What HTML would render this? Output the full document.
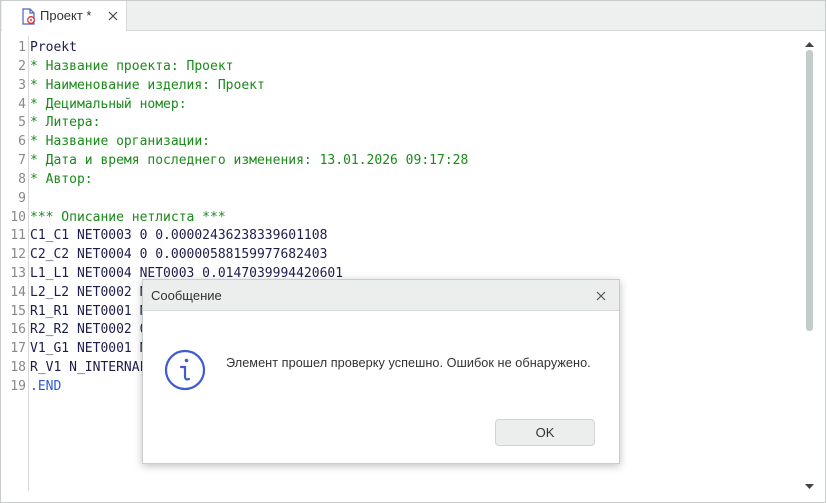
<!DOCTYPE html>
<html><head><meta charset="utf-8"><style>
body{margin:0;width:826px;height:503px;background:#fff;position:relative;overflow:hidden;font-family:"Liberation Sans","DejaVu Sans",sans-serif}
.frame{position:absolute;left:0;top:0;width:824px;height:501px;border:1px solid #c8cccb}
.tabbar{position:absolute;left:1px;top:1px;width:824px;height:29px;background:#eef0ef;border-bottom:1px solid #d6d9d8}
.tab{position:absolute;left:1px;top:0;width:124px;height:30px;background:#fff;border-right:1px solid #d6d9d8}
.tab span{position:absolute;left:38px;top:7px;font-size:13px;color:#333}
.code{position:absolute;left:0;top:39px;font-family:"DejaVu Sans Mono",monospace;font-size:13px;line-height:18.83px}
.ln{position:absolute;left:0;width:26px;text-align:right;color:#888}
.tx{position:absolute;left:30px;white-space:pre;color:#1d1d4d}
.g{color:#1a8a1a}.b{color:#2a5bd7}
.sep{position:absolute;left:28px;top:36px;width:1px;height:455px;background:#d8d8d8}
.dlg{position:absolute;left:142px;top:279px;width:476px;height:183px;background:#fff;border:1px solid #c8cccb;box-shadow:0 2px 8px rgba(0,0,0,.25)}
.dh{height:30px;background:#eceeed;border-bottom:1px solid #d8dbda;font-size:13px;color:#333}
</style></head><body>
<div class="frame"></div>
<div class="tabbar"><div class="tab">
<svg style="position:absolute;left:19px;top:7px" width="16" height="17" viewBox="0 0 16 17"><path d="M2 1h7l4 4v11H2z" fill="#fff" stroke="#4a62c8" stroke-width="1.2"/><path d="M9 1v4h4" fill="none" stroke="#4a62c8" stroke-width="1.2"/><circle cx="10" cy="12" r="3.3" fill="#fff" stroke="#d33" stroke-width="1.3"/><circle cx="10" cy="12" r="1" fill="#d33"/></svg>
<span>Проект *</span>
<svg style="position:absolute;left:106px;top:10px" width="10" height="10"><path d="M1 1l8 8M9 1L1 9" stroke="#444" stroke-width="1.2"/></svg>
</div></div>
<div class="sep"></div>
<div class="code">
<div class="ln" style="top:0">1</div><div class="tx" style="top:0">Proekt</div>
<div class="ln" style="top:18.83px">2</div><div class="tx g" style="top:18.83px">* Название проекта: Проект</div>
<div class="ln" style="top:37.66px">3</div><div class="tx g" style="top:37.66px">* Наименование изделия: Проект</div>
<div class="ln" style="top:56.5px">4</div><div class="tx g" style="top:56.5px">* Децимальный номер:</div>
<div class="ln" style="top:75.3px">5</div><div class="tx g" style="top:75.3px">* Литера:</div>
<div class="ln" style="top:94.2px">6</div><div class="tx g" style="top:94.2px">* Название организации:</div>
<div class="ln" style="top:113px">7</div><div class="tx g" style="top:113px">* Дата и время последнего изменения: 13.01.2026 09:17:28</div>
<div class="ln" style="top:131.8px">8</div><div class="tx g" style="top:131.8px">* Автор:</div>
<div class="ln" style="top:150.6px">9</div>
<div class="ln" style="top:169.5px">10</div><div class="tx g" style="top:169.5px">*** Описание нетлиста ***</div>
<div class="ln" style="top:188.3px">11</div><div class="tx" style="top:188.3px">C1_C1 NET0003 0 0.00002436238339601108</div>
<div class="ln" style="top:207.1px">12</div><div class="tx" style="top:207.1px">C2_C2 NET0004 0 0.00000588159977682403</div>
<div class="ln" style="top:226px">13</div><div class="tx" style="top:226px">L1_L1 NET0004 NET0003 0.0147039994420601</div>
<div class="ln" style="top:244.8px">14</div><div class="tx" style="top:244.8px">L2_L2 NET0002 NET0004</div>
<div class="ln" style="top:263.6px">15</div><div class="tx" style="top:263.6px">R1_R1 NET0001 NET0002</div>
<div class="ln" style="top:282.4px">16</div><div class="tx" style="top:282.4px">R2_R2 NET0002 0</div>
<div class="ln" style="top:301.3px">17</div><div class="tx" style="top:301.3px">V1_G1 NET0001 NET</div>
<div class="ln" style="top:320.1px">18</div><div class="tx" style="top:320.1px">R_V1 N_INTERNAL</div>
<div class="ln" style="top:338.9px">19</div><div class="tx b" style="top:338.9px">.END</div>
</div>
<svg style="position:absolute;left:805px;top:42px" width="9" height="6"><path d="M0 5L4.5 0L9 5z" fill="#444"/></svg>
<div style="position:absolute;left:806px;top:50px;width:7px;height:281px;background:#c4cccb;border-radius:3px"></div>
<svg style="position:absolute;left:805px;top:484px" width="9" height="6"><path d="M0 0L4.5 5L9 0z" fill="#444"/></svg>
<div class="dlg">
<div class="dh"><span style="position:absolute;left:8px;top:8px">Сообщение</span>
<svg style="position:absolute;left:453px;top:11px" width="10" height="10"><path d="M1 1l8 8M9 1L1 9" stroke="#555" stroke-width="1.2"/></svg></div>
<svg style="position:absolute;left:21px;top:69px" width="42" height="42" viewBox="0 0 42 42"><circle cx="21" cy="21" r="19" fill="none" stroke="#3f5bd0" stroke-width="2.2"/><circle cx="22.5" cy="11.5" r="1.8" fill="#3f5bd0"/><path d="M17 18h4v9c0 3 1 4 4 3" fill="none" stroke="#3f5bd0" stroke-width="2.2" stroke-linecap="round"/></svg>
<div style="position:absolute;left:83px;top:76px;font-size:12.7px;letter-spacing:0.05px;color:#333">Элемент прошел проверку успешно. Ошибок не обнаружено.</div>
<div style="position:absolute;left:352px;top:139px;width:98px;height:25px;background:#eceeed;border:1px solid #d0d4d3;border-radius:4px;text-align:center;line-height:25px;font-size:13px;color:#333">OK</div>
</div>
</body></html>
